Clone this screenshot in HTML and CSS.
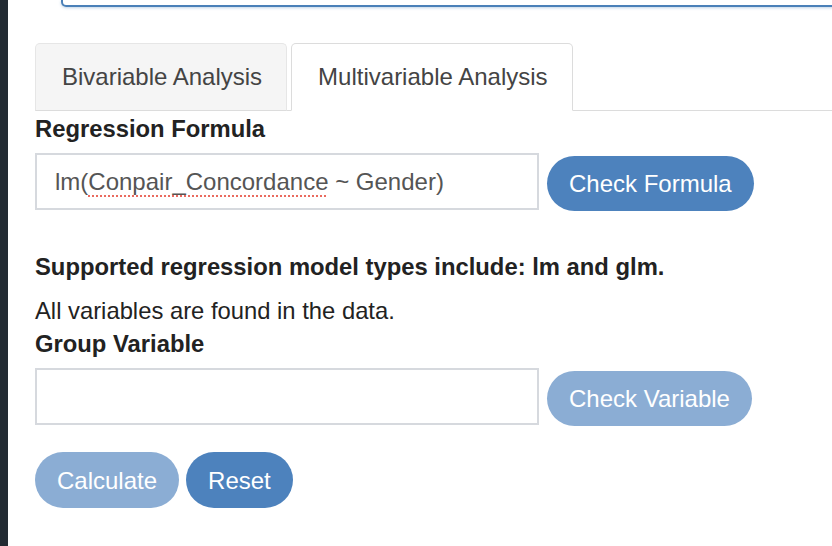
FILE: index.html
```html
<!DOCTYPE html>
<html>
<head>
<meta charset="utf-8">
<link rel="stylesheet" href="styles.css">
</head>
<body>
<div class="layout">
  <div class="sidebar"></div>
  <main class="main">
    <div class="top-input"></div>
    <ul class="tabs">
      <li class="tab">Bivariable Analysis</li>
      <li class="tab active">Multivariable Analysis</li>
    </ul>
    <div class="pane">
      <label class="label label-first">Regression Formula</label>
      <div class="row">
        <div class="field"><span class="value">lm(<span class="spell">Conpair_Concordance</span> ~ Gender)</span></div>
        <button class="btn">Check Formula</button>
      </div>
      <p class="note">Supported regression model types include: lm and glm.</p>
      <p class="msg">All variables are found in the data.</p>
      <label class="label label-group">Group Variable</label>
      <div class="row">
        <div class="field"></div>
        <button class="btn disabled">Check Variable</button>
      </div>
      <div class="actions">
        <button class="btn disabled">Calculate</button>
        <button class="btn">Reset</button>
      </div>
    </div>
  </main>
</div>
</body>
</html>
```

FILE: styles.css
```css
* { box-sizing: border-box; }
html, body { margin: 0; padding: 0; background: #fff; }
body {
  font-family: "Liberation Sans", Arial, Helvetica, sans-serif;
  font-size: 23.8px;
  line-height: 33px;
  color: #222;
  width: 832px;
  height: 546px;
  overflow: hidden;
}
.layout { display: flex; height: 546px; }
.sidebar { width: 8px; flex: none; background: #232b33; }
.main { flex: 1; padding-left: 27px; overflow: hidden; min-width: 0; }
.top-input {
  margin-left: 26px;
  width: 900px;
  height: 7px;
  border: 2px solid #4a80b8;
  border-top: none;
  border-radius: 0 0 5px 5px;
  box-shadow: 0 1px 3px rgba(74, 128, 184, 0.35);
  margin-bottom: 36px;
}
.tabs {
  list-style: none;
  margin: 0;
  padding: 0;
  display: flex;
  border-bottom: 1px solid #dcdcdc;
}
.tab {
  margin-right: 4px;
  margin-bottom: -1px;
  padding: 16px 24px 17px 26px;
  border: 1px solid #e6e6e6;
  border-bottom-color: #dcdcdc;
  border-radius: 5px 5px 0 0;
  background: #f5f5f5;
  color: #444;
  font-size: 24px;
  line-height: 33px;
}
.tab.active {
  background: #fff;
  border-color: #dcdcdc;
  border-bottom-color: transparent;
}
.label { display: block; font-weight: bold; }
.label-first { margin: 1px 0 8px; }
.label-group { margin-bottom: 8px; }
.row { display: flex; align-items: flex-end; gap: 8px; }
.field {
  width: 504px;
  height: 57px;
  border: 2px solid #d6d9de;
  padding: 0 18px;
  display: flex;
  align-items: center;
  color: #555;
  font-size: 24px;
  white-space: pre;
}
.spell {
  text-decoration: underline dotted #ea6a5f;
  text-decoration-thickness: 2px;
  text-underline-offset: 5px;
}
.btn {
  font-family: inherit;
  font-size: 24px;
  line-height: 33px;
  color: #fff;
  background: #4d82bd;
  border: none;
  border-radius: 28px;
  height: 55px;
  padding: 0 22px;
  margin: 0 0 -1px 0;
}
.btn.disabled { background: #8badd4; }
.note { font-weight: bold; margin: 40px 0 11px; }
.msg { margin: 0; }
.actions { display: flex; gap: 7px; margin-top: 27px; }
.actions .btn { height: 56px; padding: 0 22px; }
```
